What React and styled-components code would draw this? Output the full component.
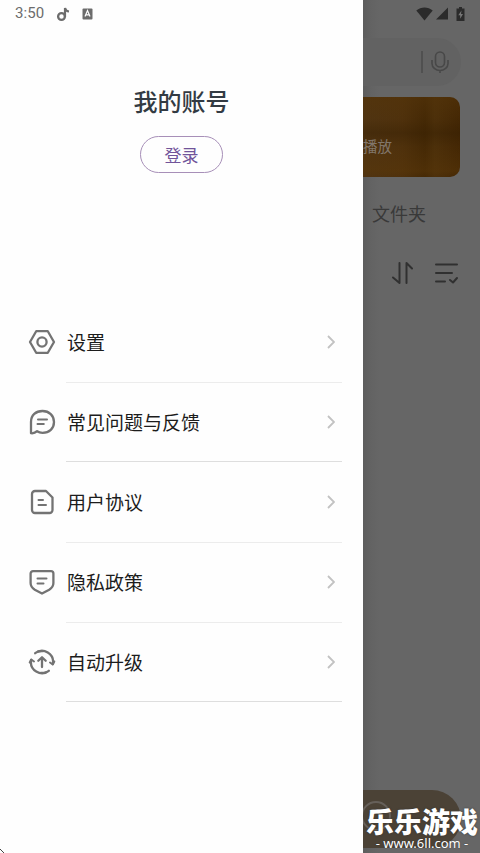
import React from 'react';
import styled, { createGlobalStyle } from 'styled-components';

const GlobalStyle = createGlobalStyle`
  * {
    box-sizing: border-box;
  }

  body {
    margin: 0;
    font-family: 'Noto Sans CJK SC', 'Noto Sans', sans-serif;
  }
`;

const Screen = styled.div`
  position: relative;
  display: grid;
  grid-template-columns: 363px 1fr;
  width: 480px;
  height: 853px;
  overflow: hidden;
  background: #656565;
`;

const Drawer = styled.div`
  display: flex;
  flex-direction: column;
  background: #fefefe;
`;

const StatusBar = styled.div`
  display: flex;
  align-items: center;
  height: 27px;
  padding: 0 0 0 15px;
  color: #6c6c6c;

  svg {
    display: block;
  }
`;

const Time = styled.span`
  width: 41px;
  font: 400 15px/27px Roboto, sans-serif;
  letter-spacing: 0.1px;
`;

const StatusIcon = styled.svg`
  margin-right: ${( props ) => props.$gap || 0}px;
`;

const Account = styled.div`
  display: flex;
  flex-direction: column;
  align-items: center;
  height: 275px;
  padding-top: 57px;
`;

const AccountTitle = styled.h1`
  margin: 0;
  color: #333b43;
  font-size: 24px;
  line-height: 34px;
  font-weight: 500;
`;

const LoginButton = styled.button`
  width: 83px;
  height: 37px;
  margin-top: 18px;
  padding: 0 0 1px;
  border: 1px solid #a78fb8;
  border-radius: 19px;
  background: transparent;
  color: #71549a;
  font-family: inherit;
  font-size: 17px;
  line-height: 33px;
`;

const Menu = styled.ul`
  margin: 0;
  padding: 0 21px 0 28px;
  list-style: none;
`;

const MenuItem = styled.li`
  display: flex;
  height: 80px;
`;

const MenuIcon = styled.svg`
  flex: none;
  width: 28px;
  height: 28px;
  margin: 26px 10px 0 0;
  fill: none;
  stroke: #737373;
  stroke-width: 2.3;
  stroke-linecap: round;
  stroke-linejoin: round;
`;

const MenuBody = styled.div`
  display: flex;
  flex: 1;
  align-items: center;
  justify-content: space-between;
  height: ${( props ) => ( props.$strong ? 80 : 81 )}px;
  padding: 0 7px 0 1px;
  border-bottom: 1px solid ${( props ) => ( props.$strong ? '#dedede' : '#ececec' )};
`;

const MenuLabel = styled.span`
  color: #1c1c1c;
  font-size: 19px;
  line-height: 28px;
`;

const Chevron = styled.svg`
  width: 8px;
  height: 14px;
  fill: none;
  stroke: #c2c2c2;
  stroke-width: 1.8;
`;

const Page = styled.div`
  display: flex;
  flex-direction: column;
  height: 853px;
  overflow: hidden;
  background: linear-gradient(90deg, #5d5d5d 0, #636363 8px, #666666 16px);
`;

const PageStatus = styled.div`
  display: flex;
  flex: none;
  align-items: center;
  justify-content: flex-end;
  height: 27px;
  padding-right: 15px;
  color: #2b2b2b;
`;

const SearchBar = styled.div`
  display: flex;
  flex: none;
  align-items: center;
  justify-content: flex-end;
  gap: 8px;
  width: 98px;
  height: 48px;
  margin-top: 11px;
  padding-right: 12px;
  border-radius: 0 24px 24px 0;
  background: #626262;
`;

const SearchDivider = styled.i`
  width: 2px;
  height: 22px;
  background: #505050;
`;

const Banner = styled.div`
  flex: none;
  width: 97px;
  height: 80px;
  margin-top: 11px;
  padding-top: 39px;
  border-radius: 0 10px 10px 0;
  background:
    linear-gradient(180deg, rgba(85, 53, 10, 0.5) 0, transparent 22px, rgba(45, 25, 0, 0.3) 36px, transparent 50px, rgba(91, 56, 9, 0.4) 74px, transparent),
    linear-gradient(90deg, #503411 0, #4f310c 40px, #452905 62px, #4d300a 72px, #442704 100%);
  color: #81766a;
  font-size: 14.5px;
  line-height: 20px;
`;

const TabLabel = styled.div`
  height: 74px;
  padding: 23px 0 0 9px;
  color: #393939;
  font-size: 18px;
  line-height: 27px;
`;

const ListTools = styled.div`
  display: flex;
  flex: 1;
  gap: 20px;
  padding: 9px 0 0 28px;
`;

const ToolIcon = styled.svg`
  width: 24px;
  height: 26px;
  fill: none;
  stroke: #303030;
  stroke-width: 2;
  stroke-linecap: round;
  stroke-linejoin: round;
`;

const PlayerBar = styled.div`
  flex: none;
  width: 98px;
  height: 58px;
  margin-bottom: 5px;
  padding: 11px 0 0;
  overflow: hidden;
  border-radius: 0 29px 29px 0;
  background: #4b4236;
`;

const PlayerRing = styled.div`
  width: 30px;
  height: 30px;
  margin-left: -2px;
  border: 2px solid #66605a;
  border-radius: 50%;
`;

const Watermark = styled.div`
  position: absolute;
  left: 364px;
  top: 803px;
  width: 116px;
  color: #fff;
  text-align: center;
  white-space: nowrap;
`;

const WatermarkName = styled.div`
  font-size: 28px;
  line-height: 36px;
  font-weight: 900;
  text-shadow: 0 0 2px #333;
`;

const WatermarkUrl = styled.div`
  margin-top: -5px;
  padding-right: 0;
  font: 400 13px/18px 'Noto Sans', sans-serif;
  text-shadow: 0 0 1px #333;
`;

const CornerMark = styled.svg`
  position: absolute;
  left: 0;
  bottom: 0;
`;

const menuItems = [
  {
    label: '设置',
    icon: (
      <>
        <path d="M8.2 3.2h11.6L26 14l-6.2 10.8H8.2L2 14z" />
        <circle cx="14" cy="14" r="4.6" />
      </>
    ),
  },
  {
    label: '常见问题与反馈',
    strong: true,
    icon: (
      <>
        <path d="M3 25.2V14C3 7 7.8 3 14.5 3S26 7.6 26 14s-4.7 10.8-11.4 10.8c-2 0-3.8-.4-5.5-1.6C7 25.1 5 25.5 3 25.2z" />
        <path d="M10 11.5h9M9.5 16h6.3" strokeWidth="2" />
      </>
    ),
  },
  {
    label: '用户协议',
    icon: (
      <>
        <path d="M7 3h11l6.5 6.5V22a3 3 0 0 1-3 3H7a3 3 0 0 1-3-3V6a3 3 0 0 1 3-3z" />
        <path d="M10.5 12h4.5M10.5 17h7.5" strokeWidth="2" />
      </>
    ),
  },
  {
    label: '隐私政策',
    icon: (
      <>
        <path d="M5 3.2h18a2.4 2.4 0 0 1 2.4 2.4V15c0 3.2-1.8 5.2-4.2 6.8L14 25.6l-7.2-3.8C4.4 20.2 2.6 18.2 2.6 15V5.600A2.400 2.400 0 0 1 5 3.200z" />
        <path d="M9.500 10.500h9M9.500 15.500h6" strokeWidth="2" />
      </>
    ),
  },
  {
    label: '自动升级',
    strong: true,
    icon: (
      <>
        <path d="M7.200 5.200A11 11 0 0 1 24.800 16M20.800 22.800A11 11 0 0 1 3.200 12" />
        <path d="M22 14.500l2.800 2 1.500-3M6 13.500l-2.800-2-1.500 3" strokeWidth="2" />
        <path d="M14 19V10M10.300 12.800L14 9.200l3.700 3.600" />
        <path d="M10 3.700a11 11 0 0 1 5-.6M18 24.200a11 11 0 0 1-5 .7" />
      </>
    ),
  },
];

const DrawerStatus = () => (
  <StatusBar>
    <Time>3:50</Time>
    <StatusIcon $gap={11} width="15" height="16" viewBox="0 0 15 16">
      <circle cx="5.500" cy="10.500" r="3.400" fill="none" stroke="currentColor" strokeWidth="2.300" />
      <path d="M9 11V2c.6 2.200 2 3.300 4 3.500" fill="none" stroke="currentColor" strokeWidth="2.200" />
    </StatusIcon>
    <StatusIcon width="11" height="12" viewBox="0 0 11 12">
      <rect x="0.500" y="0.500" width="10" height="11" rx="1" fill="currentColor" />
      <path d="M3 8.500l2.500-6 2.500 6M4 6.800h3" fill="none" stroke="#fff" strokeWidth="1.200" />
    </StatusIcon>
  </StatusBar>
);

const PhoneStatus = () => (
  <PageStatus>
    <StatusIcon $gap={3} width="17" height="14" viewBox="0 0 17 14" fill="currentColor">
      <path d="M.3 3.500C5-.6 12-.6 16.700 3.500L8.500 13.500z" />
    </StatusIcon>
    <StatusIcon $gap={8} width="12" height="13" viewBox="0 0 12 13" fill="currentColor">
      <path d="M12 .5V12.500H0z" />
    </StatusIcon>
    <StatusIcon width="9" height="14" viewBox="0 0 9 14">
      <path d="M3 0h3v1.500h2.500V14H.5V1.500H3z" fill="currentColor" />
      <path d="M5.500 3.500L2.300 8.300h1.900v3.500L7 7H5z" fill="#777" />
    </StatusIcon>
  </PageStatus>
);

const MenuRow = ( props ) => {
  const { label, icon, strong } = props;
  return (
    <MenuItem>
      <MenuIcon viewBox="0 0 28 28">{icon}</MenuIcon>
      <MenuBody $strong={strong}>
        <MenuLabel>{label}</MenuLabel>
        <Chevron viewBox="0 0 8 14">
          <path d="M1 1l6 6-6 6" />
        </Chevron>
      </MenuBody>
    </MenuItem>
  );
};

const App = () => (
  <>
    <GlobalStyle />
    <Screen>
      <Drawer>
        <DrawerStatus />
        <Account>
          <AccountTitle>我的账号</AccountTitle>
          <LoginButton>登录</LoginButton>
        </Account>
        <Menu>
          {menuItems.map( ( item ) => (
            <MenuRow key={item.label} {...item} />
          ) )}
        </Menu>
      </Drawer>
      <Page>
        <PhoneStatus />
        <SearchBar>
          <SearchDivider />
          <svg width="18" height="22" viewBox="0 0 18 22" fill="none" stroke="#484848" strokeWidth="1.600">
            <rect x="4.500" y="1" width="9" height="15" rx="4.500" />
            <path d="M1 9v3.500a8 7 0 0 0 16 0V9M9 19.500V22" />
          </svg>
        </SearchBar>
        <Banner>播放</Banner>
        <TabLabel>文件夹</TabLabel>
        <ListTools>
          <ToolIcon viewBox="0 0 24 26">
            <path d="M8.500 3v20L2 17.500M15.500 23V3l5.500 5.500" />
          </ToolIcon>
          <ToolIcon viewBox="0 0 24 26">
            <path d="M1 4.500h21M1 13h16M1 21.500h9M15 20l3 2.500L22 18" />
          </ToolIcon>
        </ListTools>
        <PlayerBar>
          <PlayerRing />
        </PlayerBar>
      </Page>
      <Watermark>
        <WatermarkName>乐乐游戏</WatermarkName>
        <WatermarkUrl>- www.6ll.com -</WatermarkUrl>
      </Watermark>
      <CornerMark width="5" height="5" viewBox="0 0 5 5">
        <path d="M0 1l4 4" stroke="#444" strokeWidth="1" />
      </CornerMark>
    </Screen>
  </>
);

export default App;
